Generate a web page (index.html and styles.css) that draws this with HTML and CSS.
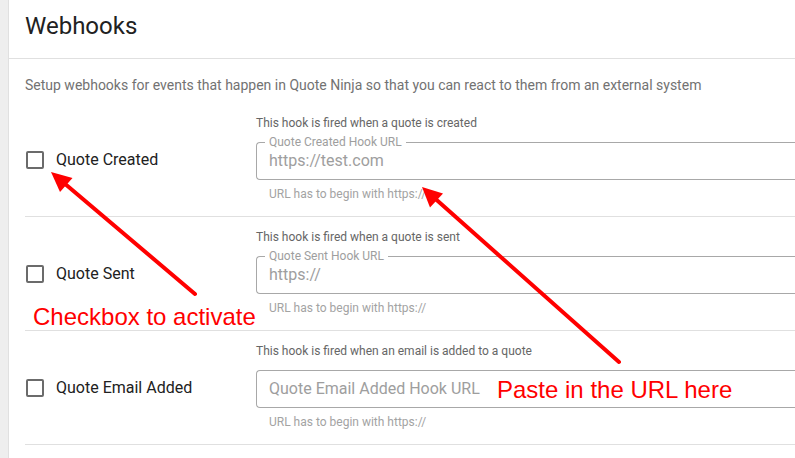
FILE: index.html
```html
<!DOCTYPE html>
<html>
<head>
<meta charset="utf-8">
<link rel="stylesheet" href="styles.css">
</head>
<body>
<div class="page">
  <div class="strip"></div>
  <div class="card">
    <div class="card-header"><h1 class="title">Webhooks</h1></div>
    <div class="card-body">
      <p class="desc">Setup webhooks for events that happen in Quote Ninja so that you can react to them from an external system</p>
      <div class="rows">
        <div class="row">
          <div class="row-left">
            <span class="checkbox"></span>
            <span class="check-label">Quote Created</span>
          </div>
          <div class="row-right">
            <div class="hint">This hook is fired when a quote is created</div>
            <div class="field">
              <span class="field-label">Quote Created Hook URL</span>
              <span class="field-value">https://test.com</span>
            </div>
            <div class="helper">URL has to begin with https://</div>
          </div>
        </div>
        <div class="row">
          <div class="row-left">
            <span class="checkbox"></span>
            <span class="check-label">Quote Sent</span>
          </div>
          <div class="row-right">
            <div class="hint">This hook is fired when a quote is sent</div>
            <div class="field">
              <span class="field-label">Quote Sent Hook URL</span>
              <span class="field-value">https://</span>
            </div>
            <div class="helper">URL has to begin with https://</div>
          </div>
        </div>
        <div class="row">
          <div class="row-left">
            <span class="checkbox"></span>
            <span class="check-label">Quote Email Added</span>
          </div>
          <div class="row-right">
            <div class="hint">This hook is fired when an email is added to a quote</div>
            <div class="field">
              <span class="field-value">Quote Email Added Hook URL</span>
            </div>
            <div class="helper">URL has to begin with https://</div>
          </div>
        </div>
      </div>
    </div>
  </div>

  <svg class="annotations" width="795" height="458" viewBox="0 0 795 458">
    <line x1="195" y1="294" x2="64" y2="183" stroke="#ff0000" stroke-width="4" stroke-linecap="round"/>
    <polygon points="51,172 72.5,178 60,192" fill="#ff0000"/>
    <line x1="619" y1="362" x2="435" y2="198.5" stroke="#ff0000" stroke-width="4" stroke-linecap="round"/>
    <polygon points="422,187 443,193.5 430,207.5" fill="#ff0000"/>
  </svg>
  <div class="note note-check">Checkbox to activate</div>
  <div class="note note-paste">Paste in the URL here</div>
</div>
</body>
</html>
```

FILE: styles.css
```css
html, body {
  margin: 0;
  padding: 0;
  overflow: hidden;
  background: #ffffff;
}

body {
  font-family: Roboto, "Liberation Sans", sans-serif;
  color: #212121;
}

.page {
  position: relative;
  display: flex;
  width: 100%;
  height: 458px;
  overflow: hidden;
}

.strip {
  width: 8px;
  flex: none;
  background: #eeeeee;
  border-right: 1px solid #e0e0e0;
}

.card {
  flex: 1;
  min-width: 0;
  background: #ffffff;
}

.card-header {
  box-sizing: border-box;
  height: 59px;
  padding: 12px 16px 0;
  border-bottom: 1px solid #e0e0e0;
}

.title {
  margin: 0;
  font-size: 24px;
  line-height: 28px;
  font-weight: 400;
  color: #212121;
}

.card-body {
  padding: 16px 0 0 16px;
}

.desc {
  margin: 0;
  font-size: 14px;
  line-height: 20px;
  color: #727272;
}

.rows {
  margin-top: 8px;
}

.row {
  box-sizing: border-box;
  display: flex;
  height: 114px;
  padding-top: 12px;
  border-bottom: 1px solid #e0e0e0;
}

.row-left {
  box-sizing: border-box;
  width: 231px;
  flex: none;
  display: flex;
  align-items: center;
  height: 36px;
  margin-top: 27px;
  padding-left: 1px;
}

.checkbox {
  box-sizing: border-box;
  width: 18px;
  height: 18px;
  border: 2px solid #6b6b6b;
  border-radius: 2px;
  flex: none;
}

.check-label {
  margin-left: 12px;
  font-size: 16px;
  line-height: 20px;
  color: #212121;
}

.row-right {
  flex: 1;
  min-width: 0;
}

.hint {
  font-size: 12px;
  line-height: 16px;
  color: #666666;
}

.field {
  position: relative;
  box-sizing: border-box;
  height: 38px;
  margin-top: 11px;
  padding: 0 12px;
  border: 1px solid #a8a8a8;
  border-right: none;
  border-radius: 4px 0 0 4px;
  display: flex;
  align-items: center;
}

.field-label {
  position: absolute;
  left: 8px;
  top: -8px;
  padding: 0 4px;
  background: #ffffff;
  font-size: 12px;
  line-height: 14px;
  color: #9e9e9e;
}

.field-value {
  font-size: 16px;
  line-height: 36px;
  color: #9e9e9e;
}

.helper {
  margin-top: 6px;
  padding-left: 13px;
  font-size: 12px;
  line-height: 16px;
  color: #a3a3a3;
}

.annotations {
  position: absolute;
  left: 0;
  top: 0;
  pointer-events: none;
}

.note {
  position: absolute;
  font-family: "Liberation Sans", Arial, sans-serif;
  font-size: 24px;
  line-height: 27px;
  color: #ff0000;
  white-space: nowrap;
}

.note-check {
  left: 33px;
  top: 303px;
}

.note-paste {
  left: 497px;
  top: 376px;
}
```
